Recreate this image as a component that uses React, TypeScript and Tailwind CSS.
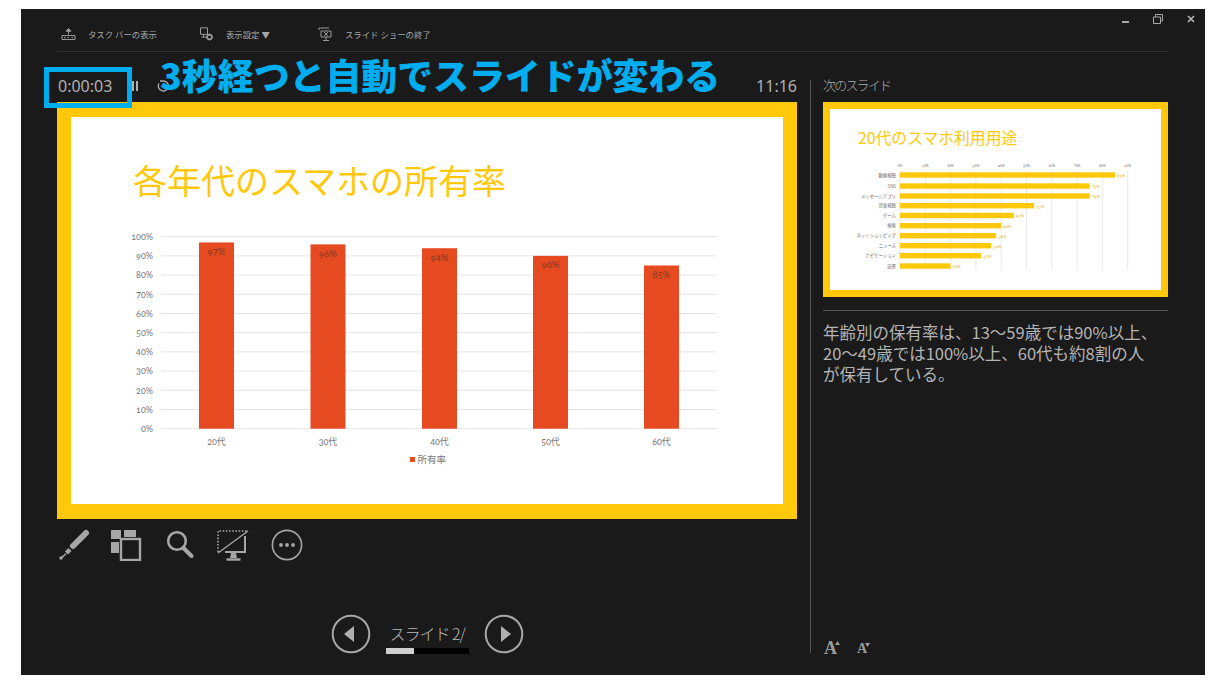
import { FC } from "react";

const font = "font-['Noto_Sans_CJK_JP','Noto_Sans',sans-serif]";

const bars = [
  { label: "20代", value: 97, x: 199 },
  { label: "30代", value: 96, x: 310.5 },
  { label: "40代", value: 94, x: 422 },
  { label: "50代", value: 90, x: 533 },
  { label: "60代", value: 85, x: 644 },
];

const ticks = [0, 10, 20, 30, 40, 50, 60, 70, 80, 90, 100];

const usage = [
  { label: "動画視聴", value: 85, y: 175 },
  { label: "SNS", value: 75, y: 186 },
  { label: "メッセージアプリ", value: 75, y: 196 },
  { label: "音楽視聴", value: 53, y: 205.7 },
  { label: "ゲーム", value: 45, y: 215.5 },
  { label: "検索", value: 40, y: 225.7 },
  { label: "ネットショッピング", value: 38, y: 235.7 },
  { label: "ニュース", value: 36, y: 245.7 },
  { label: "ナビゲーション", value: 32, y: 255.7 },
  { label: "読書", value: 20, y: 266 },
];

const OwnershipChart: FC = () => (
  <svg width={712} height={280} viewBox="71 222 712 280" className="block oldstyle-nums">
    {ticks.map((t) => {
      const y = 428.7 - t * 1.92;
      return (
        <g key={t}>
          <line x1={161} x2={717} y1={y} y2={y} stroke="#e4e4e4" strokeWidth={1} />
          <text x={153} y={y + 3.2} textAnchor="end" fontSize={9} fill="#777" fontFamily="Lato, 'Noto Sans CJK JP', sans-serif">
            {t}%
          </text>
        </g>
      );
    })}
    {bars.map((b) => {
      const top = 428.7 - b.value * 1.92;
      return (
        <g key={b.label}>
          <rect x={b.x} y={top} width={35} height={428.7 - top} fill="#e64a20" />
          <text x={b.x + 17.5} y={top + 12.5} textAnchor="middle" fontSize={9.5} fill="#7c3a24" fontFamily="Lato, sans-serif">
            {b.value}%
          </text>
          <text x={b.x + 17.5} y={445} textAnchor="middle" fontSize={9} fill="#777" fontFamily="Lato, 'Noto Sans CJK JP', sans-serif">
            {b.label}
          </text>
        </g>
      );
    })}
    <rect x={410} y={457} width={5} height={5} fill="#e64a20" />
    <text x={417.5} y={463} fontSize={9.5} fill="#777" fontFamily="'Noto Sans CJK JP', sans-serif">
      所有率
    </text>
  </svg>
);

const UsageChart: FC = () => (
  <svg width={332} height={115} viewBox="830 160 332 115" className="block oldstyle-nums">
    {[0, 1, 2, 3, 4, 5, 6, 7, 8, 9].map((i) => {
      const x = 900 + i * 25.3;
      return (
        <g key={i}>
          <line x1={x} x2={x} y1={170} y2={270} stroke="#d8d8d8" strokeWidth={0.6} />
          <text x={x} y={167} textAnchor="middle" fontSize={3.6} fill="#777" fontFamily="Lato, sans-serif">
            {i * 10}%
          </text>
        </g>
      );
    })}
    {usage.map((u) => {
      const w = u.value * 2.53;
      return (
        <g key={u.label}>
          <rect x={900} y={u.y - 2.7} width={w} height={5.4} fill="#ffc80a" />
          <text x={896} y={u.y + 1.6} textAnchor="end" fontSize={4.4} fill="#666" fontFamily="'Noto Sans CJK JP', sans-serif">
            {u.label}
          </text>
          <text x={900 + w + 2} y={u.y + 1.8} fontSize={4.4} fill="#e0b020" fontFamily="Lato, sans-serif">
            {u.value}%
          </text>
        </g>
      );
    })}
  </svg>
);

const TaskbarIcon: FC = () => (
  <svg width={15} height={14} viewBox="0 0 15 14" fill="none" stroke="#9a9a9a">
    <path d="M1 8.5h13v4H1z" />
    <path d="M5 4.2h5L7.5 1.5z" fill="#9a9a9a" />
    <path d="M7.5 4v3.5" />
    <path d="M3 10.5h1.5M6.5 10.5H8M10.5 10.5H12" />
  </svg>
);

const SettingsIcon: FC = () => (
  <svg width={15} height={14} viewBox="0 0 15 14" fill="none" stroke="#9a9a9a">
    <path d="M1.5 .8h7v6.5h-7zM4.5 7.5v2.5M2.5 10.2H7" />
    <circle cx={10.5} cy={10} r={2.4} strokeWidth={1.6} />
    <path d="M10.5 6.5v1M10.5 12.5v1M7 10h1M13 10h1" />
  </svg>
);

const EndShowIcon: FC = () => (
  <svg width={15} height={15} viewBox="0 0 15 15" fill="none" stroke="#9a9a9a">
    <path d="M1 1h10M1 1v2M3 4h10v6H3zM8 10v3M5 13.5h6" />
    <path d="M6 5l4 4M10 5l-4 4" />
  </svg>
);

const PenIcon: FC = () => (
  <svg width={32} height={32} viewBox="0 0 32 32" fill="none" stroke="#a6a6a6" strokeLinecap="round">
    <path d="M28 4L15 17" strokeWidth={6} />
    <path d="M12 20.5L8.5 24" strokeWidth={4.5} strokeLinecap="butt" />
    <path d="M7.5 25L4 28.5" strokeWidth={1.6} />
    <circle cx={3} cy={29} r={1.7} fill="#a6a6a6" stroke="none" />
  </svg>
);

const SlidesIcon: FC = () => (
  <svg width={32} height={32} viewBox="0 0 32 32" fill="#a6a6a6">
    <rect x={1} y={1} width={10} height={9} />
    <rect x={14} y={1} width={12} height={7} />
    <rect x={1} y={13} width={8} height={11} />
    <rect x={11} y={10} width={19} height={21} fill="#1a1a1a" stroke="#a6a6a6" strokeWidth={2.4} />
  </svg>
);

const SearchIcon: FC = () => (
  <svg width={30} height={32} viewBox="0 0 30 32" fill="none" stroke="#a6a6a6">
    <circle cx={12} cy={12} r={8.8} strokeWidth={2.6} />
    <path d="M18.5 19l8 8" strokeWidth={4} strokeLinecap="round" />
  </svg>
);

const ScreenIcon: FC = () => (
  <svg width={32} height={33} viewBox="0 0 32 33" fill="none" stroke="#a6a6a6">
    <path d="M1 23V2h29" strokeWidth={1.6} strokeDasharray="1.6 1.6" />
    <path d="M1 24L31 2" strokeWidth={1.4} />
    <path d="M8 23h20V7" strokeWidth={2} />
    <path d="M14 24h5l1 5h-7z" fill="#a6a6a6" stroke="none" />
    <path d="M9.5 30.5h14" strokeWidth={2.4} />
  </svg>
);

const MoreIcon: FC = () => (
  <svg width={32} height={32} viewBox="0 0 32 32" fill="#a6a6a6">
    <circle cx={16} cy={16} r={14.6} fill="none" stroke="#a6a6a6" strokeWidth={1.6} />
    <circle cx={10} cy={16} r={1.9} />
    <circle cx={16} cy={16} r={1.9} />
    <circle cx={22} cy={16} r={1.9} />
  </svg>
);

const NavButton: FC<{ dir: "prev" | "next" }> = ({ dir }) => (
  <svg width={40} height={40} viewBox="0 0 40 40" fill="#b0b0b0">
    <circle cx={20} cy={20} r={18.3} fill="none" stroke="#a8a8a8" strokeWidth={2} />
    {dir === "prev" ? <path d="M13 20l10-8v16z" /> : <path d="M27 20l-10-8v16z" />}
  </svg>
);

const SizeA: FC<{ size: "large" | "small" }> = ({ size }) => (
  <span className="flex items-start">
    <span className={size === "large" ? "text-[18px] leading-[14px]" : "text-[14px] leading-[12px]"}>A</span>
    <svg className="-ml-[2px]" width={5} height={4} viewBox="0 0 5 4" fill="#9a9a9a">
      {size === "large" ? <path d="M0 4l2.5-4L5 4z" /> : <path d="M0 0l2.5 4L5 0z" />}
    </svg>
  </span>
);

const App: FC = () => {
  return (
    <div className={`w-[1225px] h-[687px] bg-white pt-[9px] pl-[21px] overflow-hidden ${font}`}>
      <div className="relative w-[1184px] h-[666px] bg-[#1a1a1a] pl-[36px] pr-[37px] flex flex-col">
        {/* toolbar */}
        <div className="h-[43px] shrink-0 border-b border-[#333333] flex items-center pl-[4px] pt-[8px] text-[8.4px] text-[#a8a8a8]">
          <div className="flex items-center w-[138px]">
            <TaskbarIcon />
            <span className="ml-[12px]">タスク バーの表示</span>
          </div>
          <div className="flex items-center w-[119px]">
            <SettingsIcon />
            <span className="ml-[12px]">表示設定 ▼</span>
          </div>
          <div className="flex items-center">
            <EndShowIcon />
            <span className="ml-[12px]">スライド ショーの終了</span>
          </div>
        </div>

        <div className="flex flex-1 min-h-0">
          {/* current slide */}
          <div className="w-[740px] shrink-0 flex flex-col">
            <div className="h-[50px] flex items-end justify-between pb-[6px] text-[16px] leading-[20px] text-[#b0b0b0]">
              <div className="flex items-center pl-px">
                <span className="font-['Noto_Sans',sans-serif]">0:00:03</span>
                <span className="ml-[20px] w-[2px] h-[10px] bg-[#b0b0b0]" />
                <span className="ml-[2px] w-[2px] h-[10px] bg-[#b0b0b0]" />
                <svg className="ml-[19px]" width={12} height={12} viewBox="0 0 12 12" fill="none" stroke="#b0b0b0" strokeWidth={1.3}>
                  <path d="M2 3.5A5 5 0 1 0 6 1H3" />
                </svg>
              </div>
              <span className="font-['Noto_Sans',sans-serif]">11:16</span>
            </div>
            <div className="h-[417px] border-y-[15px] border-x-[14px] border-[#ffc80a] bg-white shrink-0">
              <div className="pl-[62px] pt-[38px] h-[105px] text-[34px] leading-[50px] font-normal text-[#ffc80a] whitespace-nowrap">
                各年代のスマホの所有率
              </div>
              <OwnershipChart />
            </div>
            <div className="flex items-center mt-[9px] h-[34px] pl-[1px]">
              <PenIcon />
              <div className="ml-[20px]"><SlidesIcon /></div>
              <div className="ml-[23px]"><SearchIcon /></div>
              <div className="ml-[22px]"><ScreenIcon /></div>
              <div className="ml-[22px]"><MoreIcon /></div>
            </div>
            <div className="flex items-center justify-center mt-[52px]">
              <NavButton dir="prev" />
              <div className="mx-[15px] mt-[7px] w-[83px] flex flex-col items-start">
                <span className="text-[16px] leading-[24px] font-light tracking-[-1px] text-[#b8b8b8] pl-[4px] whitespace-nowrap">スライド 2/</span>
                <div className="mt-[3px] w-[83px] h-[6px] bg-black">
                  <div className="w-[28px] h-full bg-[#cfcfcf]" />
                </div>
              </div>
              <NavButton dir="next" />
            </div>
          </div>

          {/* next slide + notes */}
          <div className="ml-[13px] mt-[28px] mb-[22px] border-l border-[#555555] pl-[12px] w-[358px] flex flex-col">
            <div className="h-[27px] -mt-[5px] text-[13px] leading-[20px] font-light tracking-[-1.8px] text-[#b0b0b0]">次のスライド</div>
            <div className="h-[195px] w-[345px] border-[7px] border-[#ffc80a] bg-white shrink-0">
              <div className="pl-[28px] pt-[16px] h-[51px] text-[15.8px] leading-[26px] text-[#ffc80a] whitespace-nowrap">
                20代のスマホ利用用途
              </div>
              <UsageChart />
            </div>
            <div className="mt-[13px] border-t border-[#555555] w-[345px] pt-[11px] text-[16.5px] leading-[21px] text-[#b4b4b4] whitespace-nowrap">
              年齢別の保有率は、13〜59歳では90%以上、
              <br />
              20〜49歳では100%以上、60代も約8割の人
              <br />
              が保有している。
            </div>
            <div className="mt-auto -mb-[2px] flex items-end gap-[17px] pl-[1px] font-['Liberation_Serif',serif] font-bold text-[#9a9a9a]">
              <SizeA size="large" />
              <SizeA size="small" />
            </div>
          </div>
        </div>

        {/* window buttons */}
        <div className="absolute top-[5px] right-[10px] flex items-center gap-[24px]">
          <span className="w-[7px] h-[2px] mt-[5px] bg-[#a8a8a8]" />
          <svg width={10} height={10} viewBox="0 0 10 10" fill="none" stroke="#a8a8a8"><path d="M.5 3h7v6.5h-7zM2.5 3V.5h7V7H8" /></svg>
          <svg width={8} height={8} viewBox="0 0 8 8" stroke="#b8b8b8" strokeWidth={1.6}><path d="M1 1l6 6M7 1l-6 6" /></svg>
        </div>

        {/* annotation drawn over the screenshot */}
        <div className="absolute left-[23px] top-[58px] w-[88px] h-[41px] border-[5px] border-[#00aeef]" />
        <div className="absolute left-[139px] top-[38px] text-[35.9px] leading-[54px] font-black text-[#00aeef] whitespace-nowrap">
          3秒経つと自動でスライドが変わる
        </div>
      </div>
    </div>
  );
};

export default App;
